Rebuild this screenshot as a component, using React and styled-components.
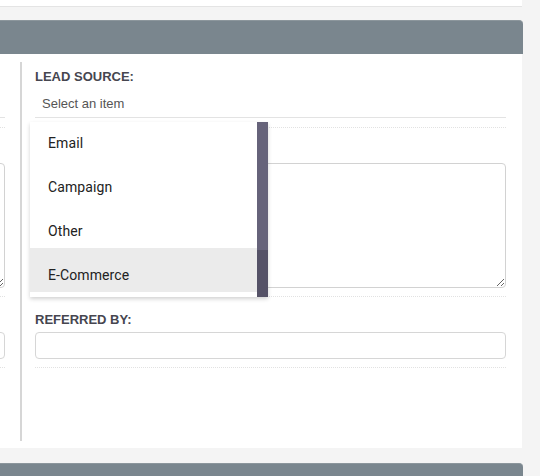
import styled, { createGlobalStyle } from "styled-components";

const GlobalStyle = createGlobalStyle`
    * {
        box-sizing: border-box;
    }
    body {
        margin: 0;
        background-color: #f4f4f4;
        font-family: "Liberation Sans", Arial, sans-serif;
    }
`;

const Page = styled.div`
    width: 523px;
    height: 476px;
    overflow: hidden;
`;

const TopCard = styled.div`
    height: 7px;
    width: 522px;
    background-color: #fff;
    border-bottom: 1px solid #e4e4e4;
    margin-bottom: 13px;
`;

const Panel = styled.section`
    margin-bottom: 15px;
`;

const PanelHeader = styled.div`
    height: 34px;
    background-color: #7a868e;
    border-top: 1px solid #8c969c;
    border-top-right-radius: 4px;
`;

const PanelBody = styled.div`
    height: 394px;
    width: 522px;
    background-color: #fff;
    padding: 8px 0 7px;
    display: flex;
`;

const LeftColumn = styled.div`
    flex: 0 0 22px;
    overflow: hidden;
    border-right: 2px solid #d6d6d6;
    display: flex;
    justify-content: flex-end;
`;

const LeftInner = styled.div`
    flex: 0 0 486px;
    padding-right: 15px;
`;

const RightColumn = styled.div`
    flex: 1;
    padding: 0 16px 0 13px;
`;

const Field = styled.div`
    position: relative;
    padding: 15px 0 8px;
    border-bottom: 1px dotted #e2e2e2;

    &:first-child {
        padding-top: 7px;
        padding-bottom: 9px;
    }
`;

const Label = styled.label`
    display: block;
    height: 15px;
    font-size: 13px;
    line-height: 15px;
    font-weight: 700;
    color: #46464f;
    margin-bottom: 5px;
`;

const Select = styled.div`
    height: 29px;
    padding-left: 7px;
    display: flex;
    align-items: center;
    font-size: 13px;
    color: #555;
    border-bottom: 1px solid #e3e3e3;
`;

const TextArea = styled.textarea`
    display: block;
    width: 100%;
    height: 125px;
    border: 1px solid #d2d2d2;
    border-radius: 4px;
    resize: vertical;
    margin: 0;
`;

const Input = styled.input`
    display: block;
    width: 100%;
    height: 27px;
    border: 1px solid #d6d6d6;
    border-radius: 4px;
    margin: 0;
`;

const Popup = styled.div`
    position: absolute;
    left: -5px;
    top: 60px;
    width: 238px;
    height: 175px;
    background-color: #fff;
    box-shadow: 0 2px 4px rgba(0, 0, 0, 0.18);
    overflow: hidden;
    display: flex;
    z-index: 2;
`;

const OptionList = styled.ul`
    flex: 1;
    list-style: none;
    margin: -6px 0 0;
    padding: 0;
`;

const Option = styled.li`
    height: 44px;
    padding: 10px 0 0 18px;
    display: flex;
    align-items: center;
    font-family: Roboto, "Liberation Sans", sans-serif;
    font-size: 14px;
    letter-spacing: 0.1px;
    color: #222;
    background-color: ${(p) => (p.$active ? "#ebebeb" : "#fff")};
`;

const Scrollbar = styled.div`
    flex: 0 0 11px;
    background-color: #66637a;
    display: flex;
    flex-direction: column;
    justify-content: flex-end;
`;

const Thumb = styled.div`
    height: 47px;
    background-color: #555267;
`;

const options = ["Email", "Campaign", "Other", "E-Commerce"];

function FormFields({ withText }) {
    return (
        <>
            <Field>
                <Label>{withText && "LEAD SOURCE:"}</Label>
                <Select>{withText && "Select an item"}</Select>
                {withText && (
                    <Popup>
                        <OptionList>
                            {options.map((option) => (
                                <Option key={option} $active={option === "E-Commerce"}>
                                    {option}
                                </Option>
                            ))}
                        </OptionList>
                        <Scrollbar>
                            <Thumb />
                        </Scrollbar>
                    </Popup>
                )}
            </Field>
            <Field>
                <Label />
                <TextArea />
            </Field>
            <Field>
                <Label>{withText && "REFERRED BY:"}</Label>
                <Input type="text" />
            </Field>
        </>
    );
}

export default function App() {
    return (
        <Page>
            <GlobalStyle />
            <TopCard />
            <Panel>
                <PanelHeader />
                <PanelBody>
                    <LeftColumn>
                        <LeftInner>
                            <FormFields />
                        </LeftInner>
                    </LeftColumn>
                    <RightColumn>
                        <FormFields withText />
                    </RightColumn>
                </PanelBody>
            </Panel>
            <Panel>
                <PanelHeader />
            </Panel>
        </Page>
    );
}
